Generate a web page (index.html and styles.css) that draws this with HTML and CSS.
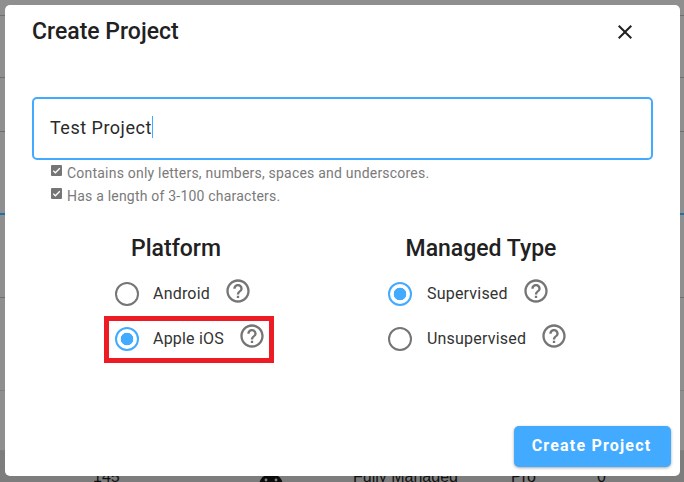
FILE: index.html
```html
<!DOCTYPE html>
<html lang="en">
<head>
<meta charset="utf-8">
<title>Create Project</title>
<link rel="stylesheet" href="styles.css">
</head>
<body>
<div class="backdrop">
  <div class="bg-row"></div>
  <div class="bg-row"></div>
  <div class="bg-row"></div>
  <div class="bg-row bg-row-active"></div>
  <div class="bg-row"></div>
  <div class="bg-row bg-row-thin"></div>
  <div class="bg-row bg-row-thin"></div>
  <div class="bg-row-data">
    <span class="cell-count">145</span>
    <svg class="cell-icon" width="26" height="26" viewBox="0 0 26 26"><path d="M1 14C1 7 6 2 13 2s12 5 12 12v12H1z" fill="#0c0c0c"/><circle cx="8" cy="8" r="1.4" fill="#808080"/><circle cx="18" cy="8" r="1.4" fill="#808080"/></svg>
    <span class="cell-type">Fully Managed</span>
    <span class="cell-plan">Pro</span>
    <span class="cell-zero">0</span>
  </div>
</div>

<div class="dialog">
  <header class="dialog-head">
    <h1 class="dialog-title">Create Project</h1>
    <svg class="close-icon" width="24" height="24" viewBox="0 0 24 24"><path d="M19 6.41 17.59 5 12 10.59 6.41 5 5 6.41 10.59 12 5 17.59 6.41 19 12 13.41 17.59 19 19 17.59 13.41 12z" fill="#212121"/></svg>
  </header>

  <div class="field"><span class="field-text">Test Project</span><span class="caret"></span></div>

  <ul class="rules">
    <li class="rule"><svg class="rule-check" width="11" height="11" viewBox="0 0 11 11"><rect width="11" height="11" rx="1" fill="#757575"/><path d="M2.3 5.7 4.4 7.8 8.8 3.3" fill="none" stroke="#fff" stroke-width="1.3"/></svg>Contains only letters, numbers, spaces and underscores.</li>
    <li class="rule"><svg class="rule-check" width="11" height="11" viewBox="0 0 11 11"><rect width="11" height="11" rx="1" fill="#757575"/><path d="M2.3 5.7 4.4 7.8 8.8 3.3" fill="none" stroke="#fff" stroke-width="1.3"/></svg>Has a length of 3-100 characters.</li>
  </ul>

  <div class="choices">
    <section class="group group-platform">
      <h2 class="group-title">Platform</h2>
      <div class="options">
        <div class="option"><span class="radio"></span><span class="option-label">Android</span><svg class="help" width="28" height="28" viewBox="0 0 24 24"><path d="M11 18h2v-2h-2v2zm1-16C6.48 2 2 6.48 2 12s4.480 10 10 10 10-4.480 10-10S17.520 2 12 2zm0 18c-4.410 0-8-3.590-8-8s3.590-8 8-8 8 3.590 8 8-3.590 8-8 8zm0-14c-2.210 0-4 1.790-4 4h2c0-1.100.9-2 2-2s2 .9 2 2c0 2-3 1.750-3 5h2c0-2.250 3-2.500 3-5 0-2.210-1.790-4-4-4z" fill="#757575"/></svg></div>
        <div class="option"><span class="radio radio-on"></span><span class="option-label">Apple iOS</span><svg class="help" width="28" height="28" viewBox="0 0 24 24"><path d="M11 18h2v-2h-2v2zm1-16C6.48 2 2 6.48 2 12s4.480 10 10 10 10-4.480 10-10S17.520 2 12 2zm0 18c-4.410 0-8-3.590-8-8s3.590-8 8-8 8 3.590 8 8-3.590 8-8 8zm0-14c-2.210 0-4 1.790-4 4h2c0-1.100.9-2 2-2s2 .9 2 2c0 2-3 1.750-3 5h2c0-2.250 3-2.500 3-5 0-2.210-1.790-4-4-4z" fill="#757575"/></svg></div>
      </div>
    </section>
    <section class="group group-type">
      <h2 class="group-title">Managed Type</h2>
      <div class="options">
        <div class="option"><span class="radio radio-on"></span><span class="option-label">Supervised</span><svg class="help" width="28" height="28" viewBox="0 0 24 24"><path d="M11 18h2v-2h-2v2zm1-16C6.48 2 2 6.48 2 12s4.480 10 10 10 10-4.480 10-10S17.520 2 12 2zm0 18c-4.410 0-8-3.590-8-8s3.590-8 8-8 8 3.590 8 8-3.590 8-8 8zm0-14c-2.210 0-4 1.790-4 4h2c0-1.100.9-2 2-2s2 .9 2 2c0 2-3 1.750-3 5h2c0-2.250 3-2.500 3-5 0-2.210-1.790-4-4-4z" fill="#757575"/></svg></div>
        <div class="option"><span class="radio"></span><span class="option-label">Unsupervised</span><svg class="help" width="28" height="28" viewBox="0 0 24 24"><path d="M11 18h2v-2h-2v2zm1-16C6.48 2 2 6.48 2 12s4.480 10 10 10 10-4.480 10-10S17.520 2 12 2zm0 18c-4.410 0-8-3.590-8-8s3.590-8 8-8 8 3.590 8 8-3.590 8-8 8zm0-14c-2.210 0-4 1.790-4 4h2c0-1.100.9-2 2-2s2 .9 2 2c0 2-3 1.750-3 5h2c0-2.250 3-2.500 3-5 0-2.210-1.790-4-4-4z" fill="#757575"/></svg></div>
      </div>
    </section>
  </div>

  <footer class="dialog-foot"><button class="primary" type="button">Create Project</button></footer>
  <div class="annotation"></div>
</div>
</body>
</html>
```
FILE: styles.css
```css
* { box-sizing: border-box; }
html, body { margin: 0; height: 100%; }
body {
  position: relative;
  width: 684px;
  height: 482px;
  overflow: hidden;
  background: #8f8f8f;
  font-family: Roboto, "Liberation Sans", sans-serif;
}

/* Dimmed page behind the dialog */
.backdrop {
  display: grid;
  grid-template-rows: 16px 62px 54px 83px 83px 93px 60px 32px;
  height: 482px;
}
.bg-row { border-bottom: 1px solid #6f6f6f; }
.bg-row-active { border-bottom: 2px solid #1f6fa8; }
.bg-row-thin { border-bottom-color: #7f7f7f; }
.bg-row-data {
  display: flex;
  align-items: flex-start;
  padding-top: 17px;
  padding-left: 93px;
  font-family: "Liberation Sans", sans-serif;
  font-size: 16px;
  line-height: 18px;
  color: #111;
  background: #7d7d7d;
}
.cell-count { width: 165px; }
.cell-icon { width: 26px; margin-top: 4px; margin-right: 69px; flex: none; }
.cell-type { width: 158px; white-space: nowrap; }
.cell-plan { width: 86px; }

/* Dialog */
.dialog {
  position: absolute;
  left: 5px;
  top: 5px;
  width: 675px;
  height: 471px;
  display: flex;
  flex-direction: column;
  padding: 0 27px 0;
  background: #fff;
  border-radius: 5px;
}
.dialog-head {
  display: flex;
  align-items: center;
  justify-content: space-between;
  height: 52px;
  padding-right: 16px;
}
.dialog-title {
  margin: 0;
  font-size: 23px;
  font-weight: 500;
  color: #212121;
}
.close-icon { display: block; width: 24px; height: 24px; margin-top: 2px; }

.field {
  display: flex;
  align-items: center;
  margin-top: 40px;
  height: 63px;
  padding-left: 16px;
  padding-bottom: 3px;
  border: 2px solid #42aaff;
  border-radius: 5px;
}
.field-text {
  font-size: 18px;
  letter-spacing: 0.5px;
  color: #2a2a2a;
}
.caret { width: 1px; height: 22px; background: #42aaff; }

.rules {
  list-style: none;
  margin: 2px 0 0;
  padding: 0 0 0 19px;
}
.rule {
  height: 23px;
  line-height: 23px;
  font-size: 14px;
  letter-spacing: 0.21px;
  color: #7a7a7a;
}
.rule-check { vertical-align: 2px; margin-right: 5px; }

.choices {
  display: flex;
  margin-top: 26px;
}
.group-platform { width: 288px; }
.group-type { width: 278px; margin-left: 22px; }
.group-title {
  margin: 0;
  text-align: center;
  font-size: 23px;
  line-height: 30px;
  font-weight: 500;
  color: #212121;
}
.options {
  display: flex;
  flex-direction: column;
  margin-top: 7px;
}
.group-platform .options { padding-left: 83px; }
.group-type .options { padding-left: 46px; }
.option {
  display: flex;
  align-items: center;
  height: 45px;
}
.radio {
  flex: none;
  width: 24px;
  height: 24px;
  border: 2px solid #757575;
  border-radius: 50%;
  margin-right: 14px;
}
.group-type .radio { margin-right: 15px; }
.radio-on {
  border-color: #42aaff;
  background: radial-gradient(circle, #42aaff 0 6px, transparent 6.6px);
}
.option-label {
  font-size: 16px;
  letter-spacing: 0.2px;
  color: #333;
}
.help { margin-left: 14px; margin-bottom: 6px; flex: none; }

.dialog-foot {
  display: flex;
  justify-content: flex-end;
  margin: auto -27px 0;
  padding: 0 9px 9px 0;
}
.primary {
  width: 157px;
  height: 41px;
  padding: 0 2px 2px 0;
  border: 0;
  border-radius: 5px;
  background: #42aaff;
  color: #fff;
  font-family: Roboto, "Liberation Sans", sans-serif;
  font-size: 16px;
  font-weight: 700;
  letter-spacing: 1.2px;
  box-shadow: 0 1px 3px rgba(0, 0, 0, 0.35);
}

/* Red highlight drawn over the screenshot */
.annotation {
  position: absolute;
  left: 99px;
  top: 311px;
  width: 170px;
  height: 47px;
  border: 5px solid #ed1c24;
}
```
